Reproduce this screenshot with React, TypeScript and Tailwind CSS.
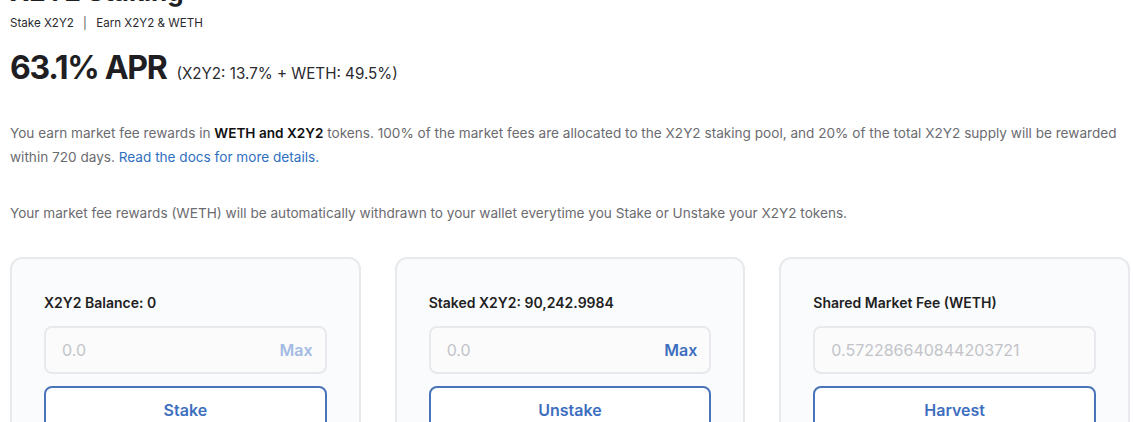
import React from "react";

interface PoolCardProps {
  label: string;
  placeholder: string;
  action: string;
  max?: "disabled" | "active";
}

function PoolCard({ label, placeholder, action, max }: PoolCardProps) {
  return (
    <div className="rounded-xl border-2 border-[#e8e9ed] bg-[#fafbfd] px-[32px] pt-[34px] pb-8">
      <h3 className="text-[14px] leading-5 font-semibold text-[#1f1f23]">{label}</h3>
      <div className="mt-[13px] flex h-[48px] items-center justify-between rounded-lg border-2 border-[#e8e9ed] bg-[#fbfbfc] pl-4 pr-[12px]">
        <span className="text-[16px] text-[#c2c4c9]">{placeholder}</span>
        {max && (
          <span
            className={`text-[16px] font-semibold ${
              max === "active" ? "text-[#3e6fbf]" : "text-[#a3bbe3]"
            }`}
          >
            Max
          </span>
        )}
      </div>
      <button className="mt-[12px] flex h-[48px] w-full items-center justify-center rounded-lg border-2 border-[#4a74b8] bg-white text-[16px] font-semibold text-[#3e6fbf]">
        {action}
      </button>
    </div>
  );
}

export default function App() {
  return (
    <div
      className="h-[422px] overflow-hidden bg-white px-[10px] text-[#1f1f23]"
      style={{ fontFamily: "Inter, 'Noto Sans', sans-serif" }}
    >
      <div className="-mt-[24px]">
        <h1 className="text-[26px] leading-8 font-bold">X2Y2 Staking</h1>
        <p className="mt-[7px] text-[11.6px] leading-4 text-[#2a2a2e]">
          Stake X2Y2 <span className="mx-[6px] text-[#555]">|</span> Earn X2Y2 &amp; WETH
        </p>
        <div className="mt-[13px] flex items-baseline gap-[10px]">
          <span className="text-[32px] leading-[48px] font-bold tracking-[-1.3px]">63.1% APR</span>
          <span className="text-[15.2px] text-[#2a2a2e]">(X2Y2: 13.7% + WETH: 49.5%)</span>
        </div>
        <p className="mt-[29px] text-[13.6px] leading-6 text-[#6b6b70]">
          You earn market fee rewards in <b className="font-semibold text-[#111]">WETH and X2Y2</b> tokens. 100% of
          the market fees are allocated to the X2Y2 staking pool, and 20% of the total X2Y2 supply will be rewarded
          within 720 days. <a className="text-[#2f6fc2]">Read the docs for more details.</a>
        </p>
        <p className="mt-[32px] text-[13.6px] leading-6 text-[#6b6b70]">
          Your market fee rewards (WETH) will be automatically withdrawn to your wallet everytime you Stake or
          Unstake your X2Y2 tokens.
        </p>
        <div className="mt-[32px] -mr-[7px] grid grid-cols-3 gap-[34px]">
          <PoolCard label="X2Y2 Balance: 0" placeholder="0.0" action="Stake" max="disabled" />
          <PoolCard label="Staked X2Y2: 90,242.9984" placeholder="0.0" action="Unstake" max="active" />
          <PoolCard label="Shared Market Fee (WETH)" placeholder="0.572286640844203721" action="Harvest" />
        </div>
      </div>
    </div>
  );
}
